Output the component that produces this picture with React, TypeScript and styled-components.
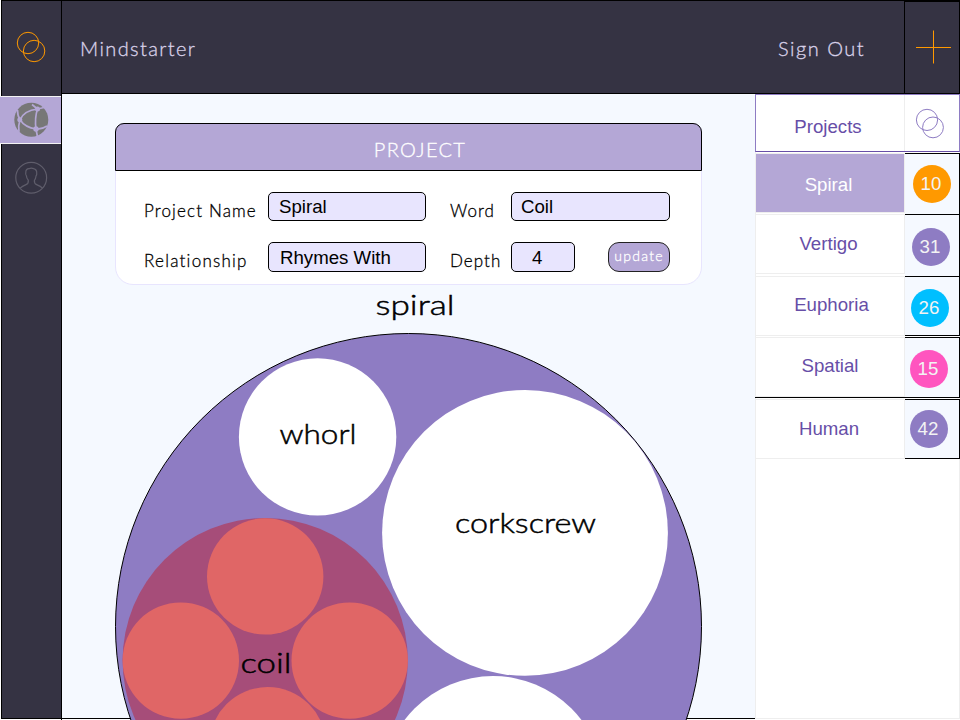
import React from "react";
import styled, { createGlobalStyle, css } from "styled-components";

const GlobalStyle = createGlobalStyle`
  *, *::before, *::after { box-sizing: border-box; }
  body { margin: 0; background: #fff; overflow: hidden; }
`;

const rounded = css`
  font-family: Lato, "Open Sans", sans-serif;
  font-weight: 300;
  -webkit-text-stroke: 0.3px currentColor;
`;
const plain = css`
  font-family: "Liberation Sans", Arial, sans-serif;
`;

const Page = styled.div`
  width: 960px;
  height: 720px;
  overflow: hidden;
  display: grid;
  grid-template-columns: 62px 1fr;
  background: #fff;
`;

const Sidebar = styled.nav`
  display: flex;
  flex-direction: column;
  height: 720px;
  border-right: 1px solid #000;
`;

const SideCell = styled.div<{ $h: number; $edge?: "top" | "bottom" }>`
  height: ${(p) => p.$h}px;
  margin-left: 1px;
  background: #353343;
  border-left: 1px solid #000;
  ${(p) => p.$edge === "top" && "border-top: 1px solid #000;"}
  ${(p) => p.$edge === "bottom" && "border-bottom: 1px solid #000;"}
`;

const ActiveCell = styled.div`
  height: 48px;
  background: #b4a7d6;
  border-top: 1px solid #f3f3f3;
  border-bottom: 1px solid #f3f3f3;
`;

const Icon = styled.svg`
  display: block;
`;

const Body = styled.div`
  display: flex;
  flex-direction: column;
  min-width: 0;
  height: 720px;
`;

const Header = styled.header`
  height: 94px;
  display: flex;
  background: #353343;
  border-top: 1px solid #000;
  border-bottom: 1px solid #000;
`;

const Brand = styled.div`
  ${rounded}
  flex: 1;
  padding: 34px 0 0 18px;
  font-size: 20px;
  line-height: 26px;
  letter-spacing: 1.4px;
  color: #d9d2e9;
`;

const SignOut = styled.div`
  ${rounded}
  width: 126px;
  padding-top: 34px;
  font-size: 20px;
  line-height: 26px;
  letter-spacing: 1.5px;
  color: #d9d2e9;
`;

const AddCell = styled.div`
  width: 56px;
  border: solid #000;
  border-width: 1px 1px 0 1px;
`;

const Columns = styled.div`
  flex: 1;
  min-height: 0;
  display: grid;
  grid-template-columns: 693px 205px;
`;

const Main = styled.main`
  height: 625px;
  background: #f5f9ff;
  border-bottom: 1px solid #000;
  padding: 29px 0 0 53px;
`;

const Card = styled.section`
  width: 587px;
  height: 162px;
  background: #fff;
  border: 1px solid #e8e5fe;
  border-radius: 9px 9px 18px 18px;
`;

const CardTitle = styled.h1`
  ${rounded}
  width: 587px;
  height: 48px;
  margin: -1px 0 0 -1px;
  padding: 12px 0 0 23px;
  border: 1px solid #000;
  border-radius: 9px 9px 0 0;
  background: #b4a7d6;
  color: #fff;
  text-align: center;
  font-size: 20px;
  line-height: 26px;
  letter-spacing: 1.3px;
`;

const Form = styled.div`
  display: grid;
  grid-template-columns: 124px 158px 24px 61px 159px;
  grid-template-rows: 29px 30px;
  row-gap: 21px;
  padding: 21px 0 0 28px;
`;

const Label = styled.label<{ $col: number; $track: number }>`
  ${rounded}
  grid-column: ${(p) => p.$col};
  align-self: center;
  padding-top: 8px;
  font-size: 17px;
  line-height: 20px;
  letter-spacing: ${(p) => p.$track}px;
  color: #000;
  white-space: nowrap;
`;

const Field = styled.div<{ $pad: number; $line: number; $w?: number }>`
  ${plain}
  width: ${(p) => (p.$w ? p.$w + "px" : "100%")};
  padding-left: ${(p) => p.$pad}px;
  border: 1px solid #000;
  border-radius: 5px;
  background: #e8e5fe;
  font-size: 18.67px;
  line-height: ${(p) => p.$line}px;
  color: #000;
`;

const Pair = styled.div`
  display: flex;
  justify-content: space-between;
`;

const Update = styled.button`
  ${rounded}
  width: 62px;
  height: 30px;
  padding: 0 0 3px;
  border: 1px solid #222;
  border-radius: 11px;
  background: #b4a7d6;
  color: #fff;
  font-size: 14px;
  letter-spacing: 1.3px;
`;

const Chart = styled.svg`
  display: block;
  width: 640px;
  height: 434px;
  overflow: visible;
  text {
    ${rounded}
    -webkit-text-stroke: 0;
    font-size: 28px;
    fill: #000;
    stroke: #000;
    stroke-width: 0.5px;
  }
`;

const Aside = styled.aside`
  display: flex;
  flex-direction: column;
  height: 625px;
  background: #fff;
  border: 1px solid #eee;
  border-top: 0;
`;

const ListHead = styled.div`
  display: grid;
  grid-template-columns: 149px 56px;
  width: 205px;
  height: 58px;
  margin: 0 -1px;
  border: 1px solid #8e7cc3;
  border-bottom-color: #674ea7;
  background: #fff;
`;

const HeadName = styled.div`
  ${plain}
  border-right: 1px solid #eee;
  padding: 20px 4px 0 0;
  text-align: center;
  font-size: 18.67px;
  line-height: 24px;
  color: #674ea7;
`;

const Row = styled.div<{ $h: number; $gap: number; $rule?: boolean }>`
  display: grid;
  grid-template-columns: 150px 55px;
  width: 205px;
  height: ${(p) => p.$h}px;
  margin: 0 -1px;
  margin-top: ${(p) => p.$gap}px;
  ${(p) => p.$rule && "border-bottom: 1px solid #000;"}
`;

const RowName = styled.div<{ $active?: boolean; $top: number; $shift: number; $gap?: number }>`
  ${plain}
  margin-bottom: ${(p) => p.$gap ?? 0}px;
  border: 1px solid #eee;
  background: ${(p) => (p.$active ? "#b4a7d6" : "#fff")};
  color: ${(p) => (p.$active ? "#fff" : "#674ea7")};
  padding: ${(p) => p.$top}px 3px 0 ${(p) => p.$shift}px;
  text-align: center;
  font-size: 18.67px;
  line-height: 24px;
`;

const CountCell = styled.div<{ $bottom?: boolean }>`
  background: #f5f9ff;
  border: solid #000;
  border-width: 1px 1px ${(p) => (p.$bottom ? 1 : 0)}px 0;
`;

const Count = styled.div<{ $x: number; $y: number; $color: string }>`
  ${plain}
  width: 38px;
  height: 38px;
  margin: ${(p) => p.$y}px 0 0 ${(p) => p.$x}px;
  border-radius: 50%;
  background: ${(p) => p.$color};
  color: #f3f3f3;
  font-size: 18.67px;
  line-height: 38px;
  text-align: center;
  padding-right: 2px;
`;

const rows = [
  { name: "Spiral", n: 10, h: 61, gap: 1, inset: 1, top: 19, shift: 0, x: 8, y: 11, color: "#ff9900", active: true },
  { name: "Vertigo", n: 31, h: 62, gap: 0, inset: 2, top: 17, shift: 0, x: 7, y: 13, color: "#8e7cc3" },
  { name: "Euphoria", n: 26, h: 60, gap: 0, top: 16, shift: 6, x: 6, y: 12, color: "#00bfff", bottom: true },
  { name: "Spatial", n: 15, h: 61, gap: 1, top: 16, shift: 3, x: 5, y: 12, color: "#ff55bf", rule: true },
  { name: "Human", n: 42, h: 60, gap: 1, top: 17, shift: 1, x: 5, y: 10, color: "#8e7cc3", bottom: true },
];

export default function App() {
  return (
    <>
      <GlobalStyle />
      <Page>
        <Sidebar>
          <SideCell $h={96} $edge="top">
            <Icon width="58" height="94" viewBox="2 1 58 94" fill="none" stroke="#ff9900" strokeWidth="1">
              <circle cx="28" cy="43" r="10.7" />
              <circle cx="34.1" cy="51" r="10.7" />
            </Icon>
          </SideCell>
          <ActiveCell>
            <Icon width="60" height="46" viewBox="0 97 60 46">
              <circle cx="31.3" cy="119.7" r="17" fill="#777" />
              <g fill="none" stroke="#b4a7d6" strokeWidth="1.7">
                <path d="M20 119.8Q24 110.5 37.5 109M20 119.8Q25 127.5 36 129M37.5 109Q34.5 118 36 129" />
                <path d="M20 119.5Q17.5 116 17.5 110M20 119.5Q18 126 19 132M37.5 109L32 104.5M37.5 109L44 107.5M36 129L37.5 137M36 129Q42 129.5 47 126" />
              </g>
              <g fill="#b4a7d6">
                <circle cx="19.8" cy="119.8" r="2.5" />
                <circle cx="37.5" cy="109" r="2.5" />
                <circle cx="36" cy="129" r="2.7" />
              </g>
            </Icon>
          </ActiveCell>
          <SideCell $h={575} $edge="bottom">
            <Icon width="58" height="90" viewBox="2 144 58 90" fill="none" stroke="#5f5d6b" strokeWidth="1.2">
              <circle cx="31.2" cy="177.8" r="15.4" />
              <path d="M20.2 188.2Q22 186.3 26 184.6Q28.7 183.5 28.3 180.2Q26.5 178.5 26.4 175.8Q25.2 174.5 25.8 172.5Q25.7 168.9 29 168.7Q31 167.6 33.6 168.6Q37 169.6 36.7 173Q37 175 36 176Q35.8 178.8 34.4 180.3Q34 183.5 36.6 184.6Q41 186.4 42.4 188.2" />
            </Icon>
          </SideCell>
        </Sidebar>
        <Body>
          <Header>
            <Brand>Mindstarter</Brand>
            <SignOut>Sign Out</SignOut>
            <AddCell>
              <Icon width="54" height="90" viewBox="905 2 54 90" stroke="#ff9900" strokeWidth="1">
                <path d="M933.5 30.5V63.5M916 47.5H951" />
              </Icon>
            </AddCell>
          </Header>
          <Columns>
            <Main>
              <Card>
                <CardTitle>PROJECT</CardTitle>
                <Form>
                  <Label $col={1} $track={1.15}>Project Name</Label>
                  <Field $pad={10} $line={28}>Spiral</Field>
                  <Label $col={4} $track={1}>Word</Label>
                  <Field $pad={9} $line={28}>Coil</Field>
                  <Label $col={1} $track={1.25}>Relationship</Label>
                  <Field $pad={11} $line={30}>Rhymes With</Field>
                  <Label $col={4} $track={1.05}>Depth</Label>
                  <Pair>
                    <Field $pad={20} $line={30} $w={64}>4</Field>
                    <Update>update</Update>
                  </Pair>
                </Form>
              </Card>
              <Chart viewBox="115 285 640 434">
                <circle cx="408.5" cy="626.5" r="293" fill="#8e7cc3" stroke="#000" />
                <circle cx="317.6" cy="436.9" r="78.7" fill="#fff" />
                <circle cx="525" cy="532.9" r="142.9" fill="#fff" />
                <circle cx="493" cy="787" r="111" fill="#fff" />
                <circle cx="265.2" cy="660.6" r="142.6" fill="#a64d79" />
                <g fill="#e06666">
                  <circle cx="265.2" cy="576.4" r="58.2" />
                  <circle cx="180.8" cy="660.6" r="58.2" />
                  <circle cx="349.7" cy="660.6" r="58.2" />
                  <circle cx="267.7" cy="745.2" r="58.2" />
                </g>
                <text x="375.5" y="314.5" textLength="79" lengthAdjust="spacingAndGlyphs">spiral</text>
                <text x="279.5" y="444" textLength="77" lengthAdjust="spacingAndGlyphs">whorl</text>
                <text x="455" y="532.5" textLength="141" lengthAdjust="spacingAndGlyphs">corkscrew</text>
                <text x="240.5" y="673" textLength="51" lengthAdjust="spacingAndGlyphs">coil</text>
              </Chart>
            </Main>
            <Aside>
              <ListHead>
                <HeadName>Projects</HeadName>
                <Icon width="54" height="56" viewBox="905 95 54 56" fill="none" stroke="#8e7cc3" strokeWidth="1">
                  <circle cx="927" cy="119.9" r="10.6" />
                  <circle cx="933" cy="127.4" r="10.4" />
                </Icon>
              </ListHead>
              {rows.map((r) => (
                <Row key={r.name} $h={r.h} $gap={r.gap} $rule={r.rule}>
                  <RowName $active={r.active} $top={r.top} $shift={r.shift} $gap={r.inset}>{r.name}</RowName>
                  <CountCell $bottom={r.bottom}>
                    <Count $x={r.x} $y={r.y} $color={r.color}>{r.n}</Count>
                  </CountCell>
                </Row>
              ))}
            </Aside>
          </Columns>
        </Body>
      </Page>
    </>
  );
}
